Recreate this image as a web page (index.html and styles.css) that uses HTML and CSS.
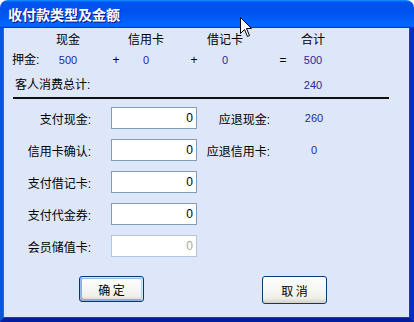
FILE: index.html
```html
<!DOCTYPE html>
<html lang="zh-CN">
<head>
    <meta charset="UTF-8">
    <meta name="viewport" content="width=device-width, initial-scale=1.0">
    <title>收付款类型及金额</title>
    <link rel="stylesheet" href="styles.css">
</head>
<body>
    <div class="window">
        <div class="titlebar"><span class="title">收付款类型及金额</span></div>
        <div class="body">
            <div class="summary">
                <div class="row">
                    <span class="c-label"></span>
                    <span class="c-cash">现金</span>
                    <span class="c-op1"></span>
                    <span class="c-credit">信用卡</span>
                    <span class="c-op2"></span>
                    <span class="c-debit">借记卡</span>
                    <span class="c-op3"></span>
                    <span class="c-total">合计</span>
                </div>
                <div class="row">
                    <span class="c-label">押金:</span>
                    <span class="c-cash num">500</span>
                    <span class="c-op1">+</span>
                    <span class="c-credit num">0</span>
                    <span class="c-op2">+</span>
                    <span class="c-debit num">0</span>
                    <span class="c-op3">=</span>
                    <span class="c-total num">500</span>
                </div>
                <div class="row total-row">
                    <span class="c-wide">客人消费总计:</span>
                    <span class="c-total num">240</span>
                </div>
            </div>
            <div class="rule"></div>

            <div class="form">
                <label class="f-label">支付现金:</label>
                <input class="f-input" type="text" value="0">
                <span class="f-label2">应退现金:</span>
                <span class="f-value num">260</span>

                <label class="f-label">信用卡确认:</label>
                <input class="f-input" type="text" value="0">
                <span class="f-label2">应退信用卡:</span>
                <span class="f-value num">0</span>

                <label class="f-label">支付借记卡:</label>
                <input class="f-input" type="text" value="0">
                <span></span>
                <span></span>

                <label class="f-label">支付代金券:</label>
                <input class="f-input" type="text" value="0">
                <span></span>
                <span></span>

                <label class="f-label">会员储值卡:</label>
                <input class="f-input" type="text" value="0" disabled>
                <span></span>
                <span></span>
            </div>

            <div class="buttons">
                <button class="btn btn-default">确 定</button>
                <button class="btn btn-cancel">取 消</button>
            </div>
        </div>

        <svg class="cursor" width="13" height="21" viewBox="0 0 13 21">
            <path d="M0.5 0.5 L0.5 16.5 L4.5 12.5 L7.5 19.5 L9.5 18.5 L6.5 11.5 L11.5 11.5 Z" fill="#fff" stroke="#000" stroke-width="1"/>
        </svg>
    </div>
</body>
</html>
```

FILE: styles.css
```css
body {
    margin: 0;
    background-color: #ffffff;
    font-family: "Liberation Sans", "Noto Sans CJK SC", sans-serif;
    font-size: 12px;
    color: #000;
}
.window {
    position: relative;
    width: 414px;
    height: 322px;
    display: flex;
    flex-direction: column;
}
.titlebar {
    height: 28px;
    border-radius: 8px 8px 0 0;
    background: linear-gradient(180deg, #0997ff, #0053ee 8%, #0050ee 40%, #0066ff 88%, #0066ff 93%, #005bff 95%, #003dd7 96%, #003dd7);
    display: flex;
    align-items: center;
    padding-left: 8px;
}
.title {
    color: #fff;
    font-family: "Noto Sans CJK SC", sans-serif;
    font-size: 14px;
    font-weight: 700;
    line-height: 16px;
    text-shadow: 1px 1px #0f1089;
}
.body {
    flex: 1;
    background-color: #dee6f9;
    border-left: 3px solid #0a55dd;
    border-right: 4px solid #0d2bbd;
    border-bottom: 4px solid #001e9e;
    box-shadow: inset 1px 0 #166aee, inset -1px -1px #0a3fd0;
}

/* top summary */
.summary {
    padding: 2px 0 0 9px;
}
.row {
    display: flex;
    height: 20px;
    align-items: center;
    line-height: 16px;
}
.row span {
    text-align: center;
    white-space: nowrap;
}
.row .c-label { width: 32px; text-align: left; }
.c-cash { width: 48px; }
.c-op1 { margin-left: 12px; width: 24px; }
.c-credit { width: 36px; }
.c-op2 { margin-left: 18px; width: 24px; }
.c-debit { margin-left: 1px; width: 36px; }
.c-op3 { margin-left: 28px; width: 24px; }
.c-total { width: 36px; }
.row .c-wide { width: 280px; padding-left: 3px; text-align: left; }
.total-row {
    margin-top: 5px;
}
.num {
    color: #1f2a9e;
    font-size: 11px;
}
.rule {
    margin: 2px 21px 0 10px;
    border-top: 2px solid #111;
}

/* form */
.form {
    display: grid;
    grid-template-columns: 108px 86px 73px 88px;
    grid-auto-rows: 22px;
    row-gap: 10px;
    align-items: center;
    margin-top: 8px;
}
.f-label {
    text-align: right;
    padding-right: 20px;
    white-space: nowrap;
}
.f-input {
    box-sizing: border-box;
    width: 86px;
    height: 22px;
    margin: 0;
    border: 1px solid #7f9db9;
    background: #fff;
    text-align: right;
    padding: 0 3px 0 2px;
    font-family: "Liberation Sans", sans-serif;
    font-size: 12px;
    color: #000;
}
.f-input:disabled {
    border-color: #b5c4dd;
    color: #aca899;
    background: #fff;
}
.f-label2 {
    text-align: right;
    white-space: nowrap;
}
.f-value {
    text-align: center;
}

/* buttons */
.buttons {
    display: flex;
    align-items: flex-start;
    padding-left: 76px;
    margin-top: 19px;
}
.btn {
    box-sizing: border-box;
    width: 65px;
    height: 26px;
    border: 1px solid #003c74;
    border-radius: 3px;
    background: linear-gradient(180deg, #ffffff, #f0f0ea 80%, #d6d0c5);
    font-family: "Noto Sans CJK SC", sans-serif;
    font-size: 12px;
    color: #000;
    padding: 0;
}
.btn-default {
    box-shadow: inset -1px 1px #cee7ff, inset 1px 2px #98b8ea, inset -2px 2px #bcd4f6, inset 1px -1px #89ade4, inset 2px -2px #89ade4;
}
.btn-cancel {
    margin-left: 118px;
    height: 28px;
}

.cursor {
    position: absolute;
    left: 240px;
    top: 17px;
}
```
